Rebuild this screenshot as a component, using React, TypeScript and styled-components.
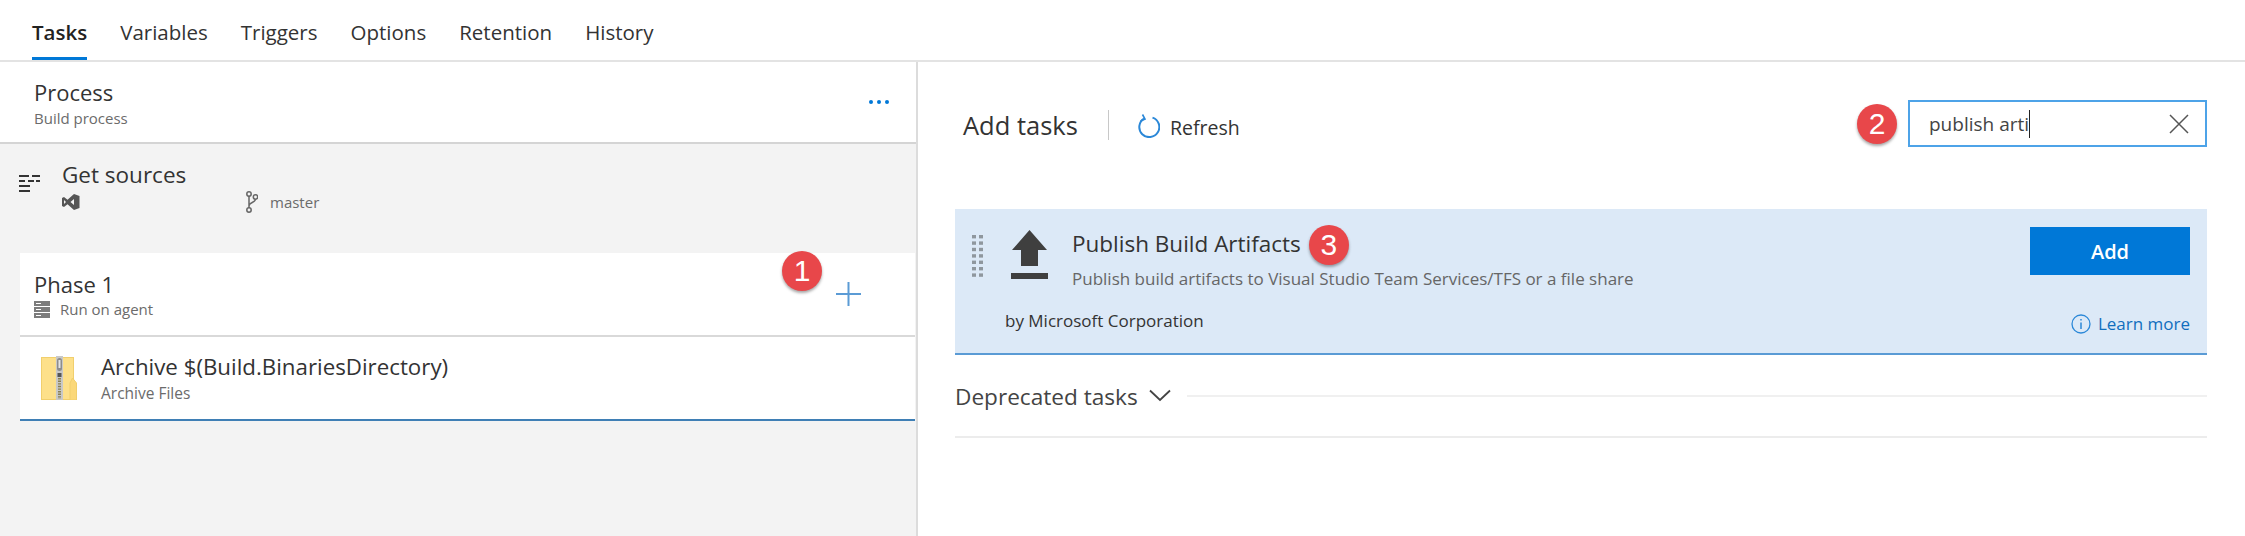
import React, { FC } from "react";
import styled, { createGlobalStyle } from "styled-components";

const GlobalStyle = createGlobalStyle`
  html, body { margin: 0; padding: 0; background: #fff; }
  body { font-family: "Open Sans", "Noto Sans", sans-serif; color: #333; }
`;

const tabs = ["Tasks", "Variables", "Triggers", "Options", "Retention", "History"];

const DragDots: FC = () => (
  <svg width="14" height="44" viewBox="0 0 14 44">
    {[0, 1, 2, 3, 4, 5, 6].map((row) => (
      <g key={row} fill="#8f979e">
        <rect x="1" y={row * 6.4 + 1} width="4" height="3.4" />
        <rect x="8" y={row * 6.4 + 1} width="4" height="3.4" />
      </g>
    ))}
  </svg>
);

const ZipIcon: FC = () => (
  <svg width="36" height="44" viewBox="0 0 36 44">
    <rect x="0.5" y="1.5" width="32" height="42" fill="#fde08a" stroke="#f1cf6d" />
    <path d="M29 44 V27 L31.5 22 L35.5 27 V44 Z" fill="#fbd879" stroke="#f1cf6d" />
    <rect x="15" y="0" width="7" height="44" fill="#c8c8c8" />
    <rect x="16" y="2" width="5" height="13" rx="2.5" fill="#8d8d8d" />
    <rect x="17.5" y="4" width="2" height="8" fill="#e4e4e4" />
    <path d="M16.5 17 h4 v4 h-4 Z" fill="#555" />
    <path d="M18.5 22 V43" stroke="#8a8052" strokeWidth="3" strokeDasharray="1.4 1.2" />
  </svg>
);

const App: FC = () => (
  <>
    <GlobalStyle />
    <Page>
      <TabBar>
        {tabs.map((tab) => (
          <Tab key={tab} $active={tab === "Tasks"}>
            {tab}
          </Tab>
        ))}
      </TabBar>
      <Body>
        <LeftPanel>
          <ProcessHeader>
            <div>
              <ProcessTitle>Process</ProcessTitle>
              <SubText>Build process</SubText>
            </div>
            <MoreDots>
              <i />
              <i />
              <i />
            </MoreDots>
          </ProcessHeader>

          <SourcesRow>
            <svg width="23" height="20" viewBox="0 0 23 20" stroke="#333" strokeWidth="2">
              <path d="M1 3 H11 M14 3 H22 M1 8 H7 M10 8 H16 M18 8 H22 M1 13 H12 M1 18 H12" />
            </svg>
            <SourcesBody>
              <SourcesTitle>Get sources</SourcesTitle>
              <SourcesMeta>
                <VsSlot>
                  <svg width="18" height="16" viewBox="0 0 18 16" fill="#555">
                    <path d="M12 0 L17.5 2 V14 L12 16 L5.5 10.3 L2 13 L0 12 V4 L2 3 L5.5 5.7 Z M12 5 L8.5 8 L12 11 Z M2 6 V10 L4 8 Z" fillRule="evenodd" />
                  </svg>
                </VsSlot>
                <svg width="12" height="22" viewBox="0 0 12 22" fill="none" stroke="#666" strokeWidth="1.5">
                  <circle cx="3" cy="3" r="2.2" />
                  <circle cx="3" cy="19" r="2.2" />
                  <circle cx="9.5" cy="6" r="2.2" />
                  <path d="M3 5 V17 M9.5 8 C9.5 12 3 11 3 15" />
                </svg>
                <BranchName>master</BranchName>
              </SourcesMeta>
            </SourcesBody>
          </SourcesRow>

          <PhaseCard>
            <div>
              <PhaseTitle>Phase 1</PhaseTitle>
              <PhaseMeta>
                <svg width="16" height="17" viewBox="0 0 16 17" fill="#7c7c7c">
                  <rect width="16" height="5" />
                  <rect y="6" width="16" height="5" />
                  <rect y="12" width="16" height="5" />
                  <path d="M2 2 h5 v1 h-5 Z M2 8 h5 v1 h-5 Z M2 14 h5 v1 h-5 Z" fill="#fff" />
                </svg>
                <SubText>Run on agent</SubText>
              </PhaseMeta>
            </div>
            <PhaseBadge>1</PhaseBadge>
            <AddIcon width="25" height="24" viewBox="0 0 25 24" stroke="#5b9bd5" strokeWidth="2">
              <path d="M12.5 0 V24 M0 12 H25" />
            </AddIcon>
          </PhaseCard>

          <TaskRow>
            <ZipIcon />
            <div>
              <TaskTitle>Archive $(Build.BinariesDirectory)</TaskTitle>
              <TaskSub>Archive Files</TaskSub>
            </div>
          </TaskRow>
        </LeftPanel>

        <RightPanel>
          <Toolbar>
            <AddTasksTitle>Add tasks</AddTasksTitle>
            <Separator />
            <RefreshIcon width="24" height="24" viewBox="0 0 24 24" fill="none" stroke="#2b88d8" strokeWidth="2">
              <path d="M8 4.6 A10 10 0 1 0 16.5 3.6" />
              <path d="M6.5 0.5 L9 5 L4.5 7" strokeWidth="1.6" />
            </RefreshIcon>
            <RefreshLabel>Refresh</RefreshLabel>
            <SearchGroup>
              <Badge>2</Badge>
              <SearchBox>
                <SearchText>publish arti</SearchText>
                <svg width="20" height="20" viewBox="0 0 20 20" stroke="#555" strokeWidth="1.5">
                  <path d="M1 1 L19 19 M19 1 L1 19" />
                </svg>
              </SearchBox>
            </SearchGroup>
          </Toolbar>

          <ResultCard>
            <CardMain>
              <CardTop>
                <DragDots />
                <svg width="37" height="50" viewBox="0 0 37 50" fill="#3f3f3f">
                  <path d="M18.5 0 L36 20 H27 V36 H10 V20 H1 Z" />
                  <rect x="0" y="43" width="37" height="6" />
                </svg>
                <CardText>
                  <CardTitleRow>
                    <CardTitle>Publish Build Artifacts</CardTitle>
                    <Badge>3</Badge>
                  </CardTitleRow>
                  <CardDescription>
                    Publish build artifacts to Visual Studio Team Services/TFS or a file share
                  </CardDescription>
                </CardText>
              </CardTop>
              <Author>by Microsoft Corporation</Author>
            </CardMain>
            <CardActions>
              <AddButton>Add</AddButton>
              <LearnMore>
                <svg width="20" height="20" viewBox="0 0 20 20" fill="none" stroke="#2b88d8" strokeWidth="1.3">
                  <circle cx="10" cy="10" r="9" />
                  <path d="M10 8.5 V15 M10 5 V6.6" strokeWidth="1.5" />
                </svg>
                Learn more
              </LearnMore>
            </CardActions>
          </ResultCard>

          <DeprecatedRow>
            <DeprecatedLabel>Deprecated tasks</DeprecatedLabel>
            <svg width="22" height="13" viewBox="0 0 22 13" fill="none" stroke="#444" strokeWidth="1.8">
              <path d="M1 1.5 L11 11 L21 1.5" />
            </svg>
            <DeprecatedRule />
          </DeprecatedRow>
        </RightPanel>
      </Body>
    </Page>
  </>
);

export default App;

const Page = styled.div`
  width: 2245px;
  height: 536px;
  display: flex;
  flex-direction: column;
  overflow: hidden;
  background: #fff;
`;

const TabBar = styled.div`
  height: 60px;
  flex: none;
  display: flex;
  gap: 33px;
  padding-left: 32px;
  border-bottom: 2px solid #e3e3e3;
`;

const Tab = styled.div<{ $active?: boolean }>`
  height: 60px;
  box-sizing: border-box;
  padding-top: 18px;
  font-size: 20.5px;
  line-height: 28px;
  font-weight: ${(p) => (p.$active ? 600 : 400)};
  color: ${(p) => (p.$active ? "#222" : "#333")};
  border-bottom: 3px solid ${(p) => (p.$active ? "#0078d7" : "transparent")};
`;

const Body = styled.div`
  flex: 1;
  display: flex;
  min-height: 0;
`;

const LeftPanel = styled.div`
  width: 916px;
  flex: none;
  background: #f3f3f3;
  border-right: 2px solid #dcdcdc;
`;

const ProcessHeader = styled.div`
  height: 80px;
  background: #fff;
  border-bottom: 2px solid #d4d4d4;
  display: flex;
  align-items: center;
  justify-content: space-between;
  padding: 0 27px 0 34px;
`;

const ProcessTitle = styled.div`
  font-size: 22px;
  line-height: 31px;
  color: #333;
`;

const SubText = styled.div`
  font-size: 15px;
  line-height: 20px;
  color: #6b6b6b;
`;

const MoreDots = styled.div`
  display: flex;
  gap: 4px;

  i {
    width: 4px;
    height: 4px;
    border-radius: 50%;
    background: #0078d7;
  }
`;

const SourcesRow = styled.div`
  height: 109px;
  box-sizing: border-box;
  display: flex;
  align-items: flex-start;
  gap: 21px;
  padding: 17px 0 0 18px;

  > svg {
    margin-top: 12px;
  }
`;

const SourcesBody = styled.div`
  display: flex;
  flex-direction: column;
`;

const SourcesTitle = styled.div`
  font-size: 22.5px;
  line-height: 28px;
  color: #333;
`;

const SourcesMeta = styled.div`
  display: flex;
  align-items: center;
  margin-top: 2px;
`;

const VsSlot = styled.div`
  width: 184px;
  display: flex;
`;

const BranchName = styled.span`
  font-size: 15px;
  color: #6b6b6b;
  margin-left: 12px;
`;

const PhaseCard = styled.div`
  position: relative;
  height: 84px;
  margin: 0 1px 0 20px;
  padding: 0 54px 0 14px;
  box-sizing: border-box;
  background: #fff;
  border-bottom: 2px solid #d9d9d9;
  display: flex;
  align-items: center;
  justify-content: space-between;
`;

const PhaseTitle = styled.div`
  font-size: 22px;
  line-height: 30px;
  color: #333;
`;

const PhaseMeta = styled.div`
  display: flex;
  align-items: center;
  gap: 10px;
`;

const Badge = styled.div`
  width: 40px;
  height: 40px;
  flex: none;
  border-radius: 50%;
  background: #e8474a;
  color: #fff;
  font-family: "Liberation Sans", sans-serif;
  font-size: 30px;
  line-height: 40px;
  text-align: center;
  box-shadow: 0 2px 3px rgba(0, 0, 0, 0.35);
`;

const PhaseBadge = styled(Badge)`
  position: absolute;
  left: 762px;
  top: -2px;
`;

const AddIcon = styled.svg`
  margin-top: 0;
`;

const TaskRow = styled.div`
  height: 84px;
  box-sizing: border-box;
  margin: 0 1px 0 20px;
  padding-left: 21px;
  background: #fff;
  border-bottom: 2px solid #3f7fb5;
  display: flex;
  align-items: center;
  gap: 24px;
`;

const TaskTitle = styled.div`
  font-size: 22.3px;
  line-height: 28px;
  color: #333;
`;

const TaskSub = styled.div`
  font-size: 15.5px;
  line-height: 20px;
  color: #6b6b6b;
  margin-top: 2px;
`;

const RightPanel = styled.div`
  flex: 1;
  min-width: 0;
  padding: 0 38px 0 37px;
`;

const Toolbar = styled.div`
  height: 147px;
  box-sizing: border-box;
  padding: 38px 0 0 8px;
  display: flex;
  align-items: flex-start;
`;

const AddTasksTitle = styled.div`
  font-size: 25.5px;
  line-height: 50px;
  color: #333;
`;

const Separator = styled.div`
  width: 1px;
  height: 30px;
  background: #c8c8c8;
  margin: 10px 29px 0 30px;
`;

const RefreshIcon = styled.svg`
  margin-top: 14px;
  margin-left: -2px;
`;

const RefreshLabel = styled.div`
  font-size: 19.5px;
  line-height: 50px;
  color: #333;
  margin: 3px 0 0 10px;
`;

const SearchGroup = styled.div`
  margin-left: auto;
  display: flex;
  align-items: center;
  gap: 11px;
`;

const SearchBox = styled.div`
  width: 299px;
  height: 47px;
  box-sizing: border-box;
  border: 2px solid #4da3e8;
  display: flex;
  align-items: center;
  justify-content: space-between;
  padding: 0 16px 0 19px;
`;

const SearchText = styled.span`
  font-size: 19px;
  color: #444;
  border-right: 1px solid #222;
  line-height: 28px;
  margin-top: 1px;
`;

const ResultCard = styled.div`
  height: 146px;
  box-sizing: border-box;
  background: #dce9f7;
  border-bottom: 2px solid #5a9bd5;
  display: flex;
  justify-content: space-between;
`;

const CardMain = styled.div`
  padding: 16px 0 0 16px;
`;

const CardTop = styled.div`
  display: flex;
  align-items: flex-start;
  gap: 26px;

  > svg:first-child {
    margin-top: 9px;
  }

  > svg:nth-child(2) {
    margin: 5px -2px 0 0;
  }
`;

const CardText = styled.div``;

const CardTitleRow = styled.div`
  display: flex;
  align-items: center;
  gap: 8px;
`;

const CardTitle = styled.div`
  font-size: 22.5px;
  color: #333;
  margin-top: -3px;
`;

const CardDescription = styled.div`
  font-size: 17px;
  color: #666;
  margin-top: 2px;
`;

const Author = styled.div`
  font-size: 17px;
  color: #333;
  margin: 19px 0 0 34px;
`;

const CardActions = styled.div`
  padding: 18px 17px 0 0;
  display: flex;
  flex-direction: column;
  align-items: flex-end;
`;

const AddButton = styled.div`
  width: 160px;
  height: 48px;
  background: #0078d7;
  color: #fff;
  font-size: 20px;
  font-weight: 600;
  line-height: 50px;
  text-align: center;
`;

const LearnMore = styled.div`
  display: flex;
  align-items: center;
  gap: 7px;
  margin-top: 37px;
  font-size: 17px;
  color: #106ebe;
`;

const DeprecatedRow = styled.div`
  height: 83px;
  box-sizing: border-box;
  display: flex;
  align-items: center;
  border-bottom: 2px solid #ececec;
  gap: 11px;
`;

const DeprecatedLabel = styled.div`
  font-size: 22.6px;
  color: #444;
  margin-top: 1px;
`;

const DeprecatedRule = styled.div`
  flex: 1;
  height: 2px;
  background: #f0f0f0;
  margin-left: 5px;
`;
